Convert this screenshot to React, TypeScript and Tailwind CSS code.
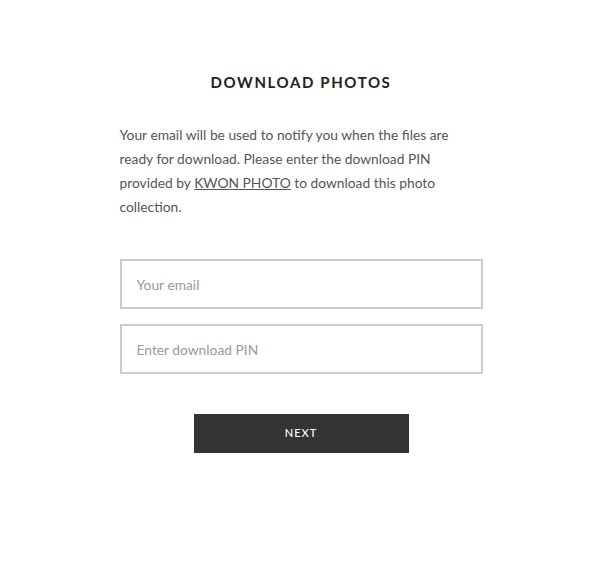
export default function App() {
  return (
    <div className="flex min-h-[561px] justify-center bg-white font-['Lato','Liberation_Sans',sans-serif]">
      <div className="mt-[73px] flex w-[363px] flex-col">
        <h1 className="text-center text-[15px] font-bold leading-[18px] tracking-[1.6px] text-[#222]">
          DOWNLOAD PHOTOS
        </h1>
        <p className="mt-[32px] text-[13.8px] leading-[24px] text-[#555]">
          Your email will be used to notify you when the files are ready for
          download. Please enter the download PIN provided by{" "}
          <a href="#" className="underline">
            KWON PHOTO
          </a>{" "}
          to download this photo collection.
        </p>
        <form className="mt-[40px] flex flex-col gap-[15px]">
          <input
            type="email"
            placeholder="Your email"
            className="h-[50px] w-full border-2 border-[#ccc] px-[15px] text-[13.8px] text-[#333] outline-none placeholder:text-[#999]"
          />
          <input
            type="text"
            placeholder="Enter download PIN"
            className="h-[50px] w-full border-2 border-[#ccc] px-[15px] text-[13.8px] text-[#333] outline-none placeholder:text-[#999]"
          />
          <div className="mt-[25px] flex justify-center">
            <button
              type="button"
              className="h-[39px] w-[215px] bg-[#333] text-[11px] font-medium tracking-[1px] text-white"
            >
              NEXT
            </button>
          </div>
        </form>
      </div>
    </div>
  );
}
